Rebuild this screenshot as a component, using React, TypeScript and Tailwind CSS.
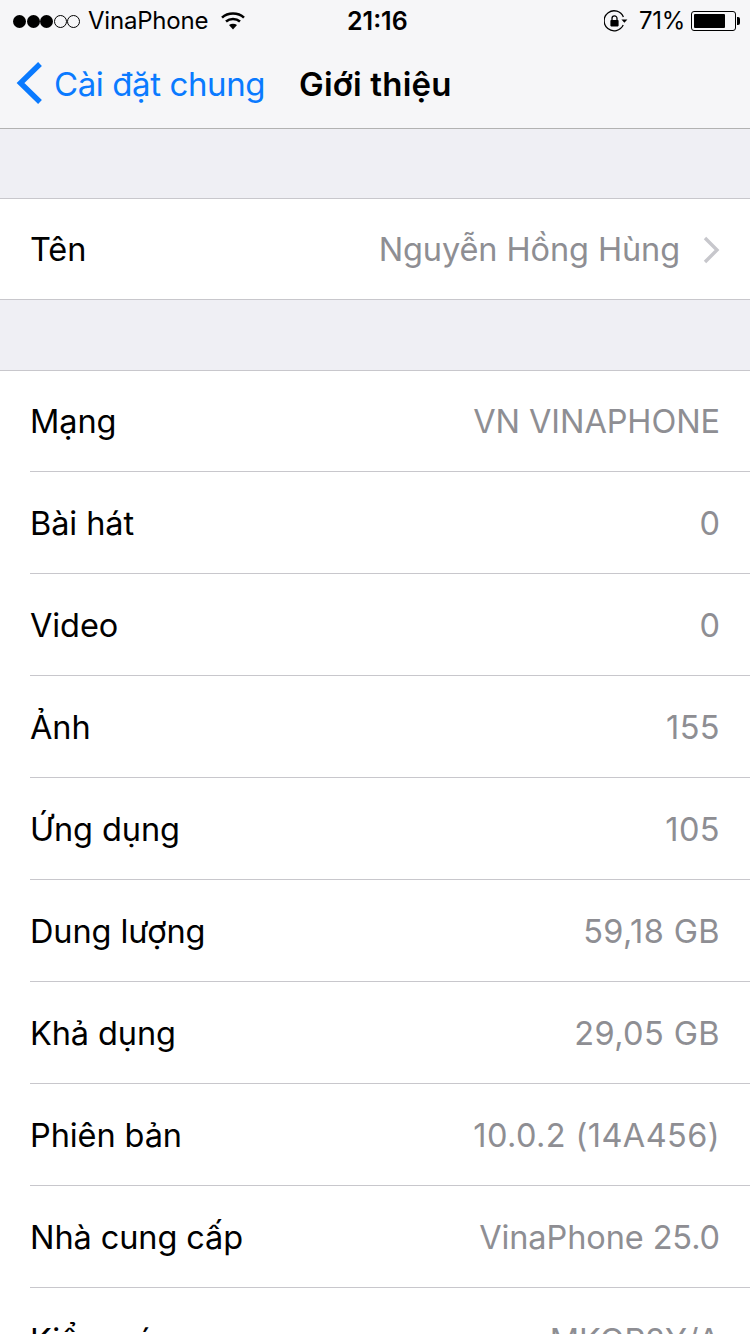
const font = { fontFamily: "Inter, 'Noto Sans', sans-serif" };

function Row({ label, value, wide, last }: { label: string; value: string; wide?: boolean; last?: boolean }) {
  return (
    <div className="pl-[30px]">
      <div className={`h-[102px] flex items-center justify-between pr-[30px] pt-[4px] ${last ? "" : "border-b border-[#c8c7cc]"}`}>
        <span className="text-[32.5px] tracking-[-0.1px] text-black">{label}</span>
        <span className={`text-[32.5px] text-[#8e8e93] ${wide ? "tracking-[0.4px]" : "tracking-[-0.1px]"}`}>{value}</span>
      </div>
    </div>
  );
}

function Wifi() {
  return (
    <svg width="26" height="20" viewBox="0 0 26 20" fill="none" stroke="#000" strokeWidth="2.6">
      <path d="M2 6.6 C8 1.2 18 1.2 24 6.6" />
      <path d="M6 10.6 C10 7.2 16 7.2 20 10.6" />
      <path d="M13 18.6 L9 14 C11.4 12.4 14.6 12.4 17 14 Z" fill="#000" stroke="none" />
    </svg>
  );
}

function Rotation() {
  return (
    <svg width="24" height="22" viewBox="0 0 24 22" fill="none">
      <path d="M19.4 7 A10 10 0 1 0 19.2 15" stroke="#000" strokeWidth="1.3" />
      <rect x="6.4" y="10" width="8.2" height="6.4" rx="0.8" fill="#000" />
      <path d="M8 10 V8.4 a2.5 2.5 0 0 1 5 0 V10" stroke="#000" strokeWidth="1.3" />
      <path d="M17.4 9.6 h6 l-3 3.2 z" fill="#000" />
    </svg>
  );
}

export default function App() {
  return (
    <div style={font} className="w-[750px] h-[1334px] overflow-hidden bg-[#efeff4]">
      <div className="h-[129px] bg-[#f6f6f8] border-b border-[#b2b2b2] flex flex-col">
        <div className="h-[40px] flex items-center justify-between pl-[13px] pr-[10px] pt-[2px] relative">
          <div className="flex items-center">
            <div className="flex gap-[0.5px] items-center">
              <span className="w-[13px] h-[13px] rounded-full bg-black" />
              <span className="w-[13px] h-[13px] rounded-full bg-black" />
              <span className="w-[13px] h-[13px] rounded-full bg-black" />
              <span className="w-[13px] h-[13px] rounded-full border border-black" />
              <span className="w-[13px] h-[13px] rounded-full border border-black" />
            </div>
            <span className="text-[24px] tracking-[-0.2px] ml-[8px] text-black">VinaPhone</span>
            <span className="ml-[12px] flex"><Wifi /></span>
          </div>
          <span className="absolute left-[347px] top-[4px] text-[25px] font-semibold leading-[34px] text-black">21:16</span>
          <div className="flex items-center">
            <Rotation />
            <span className="text-[24px] tracking-[-0.3px] ml-[11px] text-black">71%</span>
            <div className="ml-[6px] w-[45px] h-[20px] border border-black rounded-[3px] p-[2px]">
              <div className="w-[31px] h-full bg-black rounded-[1px]" />
            </div>
            <div className="w-[3px] h-[8px] bg-black rounded-r-[2px] ml-[1px]" />
          </div>
        </div>
        <div className="flex-1 flex items-center pb-[2px] relative">
          <svg className="ml-[15px]" width="28" height="44" viewBox="0 0 28 44" fill="none" stroke="#0a7aff" strokeWidth="5.4">
            <path d="M25 3 L5.5 22 L25 41" />
          </svg>
          <span className="ml-[11px] pt-[4px] text-[33px] tracking-[-0.4px] text-[#0a7aff]">Cài đặt chung</span>
          <span className="absolute left-[299px] pt-[4px] text-[33px] font-semibold tracking-[0.2px] text-black">Giới thiệu</span>
        </div>
      </div>

      <div className="h-[69px]" />

      <div className="bg-white border-y border-[#c8c7cc] h-[102px] flex items-center justify-between pl-[30px] pr-[30px] pt-[2px]">
        <span className="text-[32.5px] tracking-[-0.1px] text-black">Tên</span>
        <div className="flex items-center">
          <span className="text-[32.5px] tracking-[-0.1px] text-[#8e8e93]">Nguyễn Hồng Hùng</span>
          <svg className="ml-[23px]" width="17" height="28" viewBox="0 0 17 28" fill="none" stroke="#c7c7cc" strokeWidth="3.4">
            <path d="M2 2 L14 14 L2 26" />
          </svg>
        </div>
      </div>

      <div className="h-[70px]" />

      <div className="bg-white border-t border-[#c8c7cc]">
        <div className="-mt-[1px]">
          <Row label="Mạng" value="VN VINAPHONE" />
          <Row label="Bài hát" value="0" />
          <Row label="Video" value="0" />
          <Row label="Ảnh" value="155" wide />
          <Row label="Ứng dụng" value="105" wide />
          <Row label="Dung lượng" value="59,18 GB" wide />
          <Row label="Khả dụng" value="29,05 GB" wide />
          <Row label="Phiên bản" value="10.0.2 (14A456)" wide />
          <Row label="Nhà cung cấp" value="VinaPhone 25.0" />
          <Row label="Kiểu máy" value="MKQP2Y/A" last />
        </div>
      </div>
    </div>
  );
}
